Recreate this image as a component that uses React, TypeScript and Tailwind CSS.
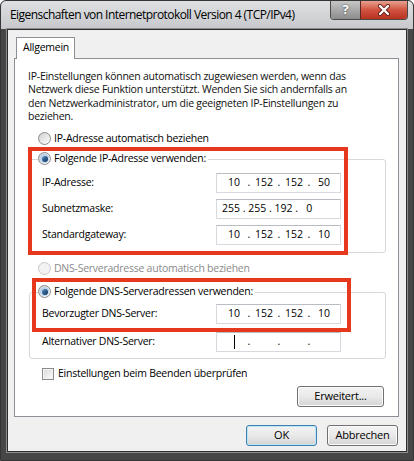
import { Fragment } from 'react';

const ui = "font-['Open_Sans','Noto_Sans',sans-serif]";

function Radio({ checked = false, disabled = false }: { checked?: boolean; disabled?: boolean }) {
  return (
    <span
      className={`flex h-[13px] w-[13px] shrink-0 items-center justify-center rounded-full border ${
        disabled ? 'border-[#c8c8c8] bg-[#f2f2f2]' : 'border-[#8a8a8a] bg-gradient-to-br from-[#cfcfcf] to-[#ffffff]'
      }`}
    >
      {checked && (
        <span className="flex h-[9px] w-[9px] items-center justify-center rounded-full bg-[#b9d3ec]">
          <span className="h-[6px] w-[6px] rounded-full bg-gradient-to-br from-[#6f9cc9] via-[#2d5a88] to-[#12385f]" />
        </span>
      )}
    </span>
  );
}

function IpField({ parts, raw, cursor }: { parts?: string[]; raw?: string; cursor?: boolean }) {
  return (
    <div className="flex h-[20px] w-[125px] shrink-0 items-center border border-[#d6d9de] border-t-[#b9bdc3] bg-white pl-[5px] text-[10.5px] tracking-normal text-black">
      {raw ? (
        <span className="whitespace-pre">{raw}</span>
      ) : (
        (parts ?? ['', '', '', '']).map((p, i) => (
          <Fragment key={i}>
            {i > 0 && <span className="w-[6px] text-center">.</span>}
            <span className="flex w-[24px] justify-center">
              {cursor && i === 0 ? <span className="h-[14px] w-px bg-black" /> : p}
            </span>
          </Fragment>
        ))
      )}
    </div>
  );
}

function Row({ label, children }: { label: string; children: React.ReactNode }) {
  return (
    <div className="flex h-[20px] items-center">
      <span className="w-[174px] shrink-0">{label}</span>
      {children}
    </div>
  );
}

function WinButton({ label, primary = false, width }: { label: string; primary?: boolean; width: string }) {
  return (
    <button
      className={`flex h-[21px] ${width} items-center justify-center rounded-[3px] border bg-gradient-to-b from-[#f3f3f3] via-[#e9e9e9] to-[#d4d4d4] text-[11px] text-black ${
        primary
          ? 'border-[#3c7fb1] shadow-[inset_0_0_0_1px_#bfe6f7]'
          : 'border-[#707070] shadow-[inset_0_0_0_1px_#fbfbfb]'
      }`}
    >
      {label}
    </button>
  );
}

export default function App() {
  return (
    <div className={`relative flex h-[461px] w-[414px] flex-col overflow-hidden rounded-t-[6px] border border-[#353535] bg-[#464646] ${ui}`}>
      {/* title bar */}
      <div className="flex h-[28px] shrink-0 items-start justify-between bg-gradient-to-b from-[#dfe0e2] to-[#c6c8cb]">
        <span className="pl-[9px] pt-[5px] text-[12px] tracking-[-0.55px] text-black">
          Eigenschaften von Internetprotokoll Version 4 (TCP/IPv4)
        </span>
        <div className="mr-[5px] flex h-[19px] overflow-hidden rounded-b-[4px] border border-t-0 border-[#4a4a4a]">
          <div className="flex w-[29px] items-center justify-center bg-gradient-to-b from-[#c6c6c6] via-[#a9a9a9] to-[#8c8c8c] text-[13px] font-bold text-white [text-shadow:0_0_2px_#333]">
            ?
          </div>
          <div className="flex w-[47px] items-center justify-center border-l border-[#5a2a22] bg-gradient-to-b from-[#e6a090] via-[#d0523f] to-[#b8321f]">
            <svg width="14" height="12" viewBox="0 0 14 12">
              <path d="M3 2 L11 10 M11 2 L3 10" stroke="#5e1a10" strokeWidth="4" strokeLinecap="round" />
              <path d="M3 2 L11 10 M11 2 L3 10" stroke="#ffffff" strokeWidth="2.4" strokeLinecap="round" />
            </svg>
          </div>
        </div>
      </div>

      {/* frame + client */}
      <div className="flex flex-1 flex-col px-[6px] pb-[8px]">
        <div className="flex flex-1 flex-col border border-[#2c2c2c] bg-[#f0f0f0] pl-[6px] pr-[7px] pt-[7px] text-[10.5px] tracking-[-0.25px] text-black shadow-[0_0_0_1px_#8d8d8d]">
          {/* tab */}
          <div className="relative z-10 -mb-px ml-[2px] flex h-[22px] w-[59px] items-center border border-b-0 border-[#8c8f96] bg-white pl-[6px] pb-[1px]">
            Allgemein
          </div>

          {/* panel */}
          <div className="flex flex-col border border-[#8c8f96] bg-white pb-[9px] pl-[13px] pr-[12px] pt-[11px]">
            <p className="whitespace-nowrap leading-[13.4px] text-[#111]">
              IP-Einstellungen können automatisch zugewiesen werden, wenn das
              <br />
              Netzwerk diese Funktion unterstützt. Wenden Sie sich andernfalls an
              <br />
              den Netzwerkadministrator, um die geeigneten IP-Einstellungen zu
              <br />
              beziehen.
            </p>

            <div className="mt-[7px] flex h-[16px] items-center gap-[3px] pl-[10px]">
              <Radio />
              <span>IP-Adresse automatisch beziehen</span>
            </div>

            <div className="ml-[1px] mt-[12px] flex flex-col rounded-[3px] border border-[#d5d8dc] pb-[7px] pl-[12px]">
              <div className="-mt-[9px] -ml-[4px] flex h-[16px] items-center gap-[3px] self-start bg-white pr-[2px]">
                <Radio checked />
                <span>Folgende IP-Adresse verwenden:</span>
              </div>
              <div className="mt-[6px] flex flex-col gap-[6px]">
                <Row label="IP-Adresse:">
                  <IpField parts={['10', '152', '152', '50']} />
                </Row>
                <Row label="Subnetzmaske:">
                  <IpField raw={'255 . 255 . 192 .   0'} />
                </Row>
                <Row label="Standardgateway:">
                  <IpField parts={['10', '152', '152', '10']} />
                </Row>
              </div>
            </div>

            <div className="mt-[8px] flex h-[16px] items-center gap-[3px] pl-[10px] text-[#8a8a8a]">
              <Radio disabled />
              <span>DNS-Serveradresse automatisch beziehen</span>
            </div>

            <div className="ml-[1px] mt-[15px] flex flex-col rounded-[3px] border border-[#d5d8dc] pb-[6px] pl-[12px]">
              <div className="-mt-[9px] -ml-[4px] flex h-[16px] items-center gap-[3px] self-start bg-white pr-[2px]">
                <Radio checked />
                <span>Folgende DNS-Serveradressen verwenden:</span>
              </div>
              <div className="mt-[4px] flex flex-col gap-[8px]">
                <Row label="Bevorzugter DNS-Server:">
                  <IpField parts={['10', '152', '152', '10']} />
                </Row>
                <Row label="Alternativer DNS-Server:">
                  <IpField cursor />
                </Row>
              </div>
            </div>

            <div className="mt-[7px] flex h-[16px] items-center gap-[4px] pl-[14px]">
              <span className="h-[12px] w-[12px] shrink-0 border border-[#8a8a8a] bg-gradient-to-br from-[#d9d9d9] to-[#fbfbfb] shadow-[inset_0_0_0_1px_#f4f4f4]" />
              <span>Einstellungen beim Beenden überprüfen</span>
            </div>

            <div className="mt-[4px] flex justify-end pr-[2px]">
              <WinButton label="Erweitert..." width="w-[87px]" />
            </div>
          </div>

          {/* dialog buttons */}
          <div className="mt-[8px] flex justify-end gap-[10px] pr-px">
            <WinButton label="OK" primary width="w-[71px]" />
            <WinButton label="Abbrechen" width="w-[71px]" />
          </div>
        </div>
      </div>

      {/* red annotation boxes */}
      <div className="pointer-events-none absolute left-[27px] top-[146px] h-[108px] w-[320px] border-[4px] border-[#e5381c]" />
      <div className="pointer-events-none absolute left-[31px] top-[277px] h-[54px] w-[319px] border-[4px] border-[#e5381c]" />
    </div>
  );
}
